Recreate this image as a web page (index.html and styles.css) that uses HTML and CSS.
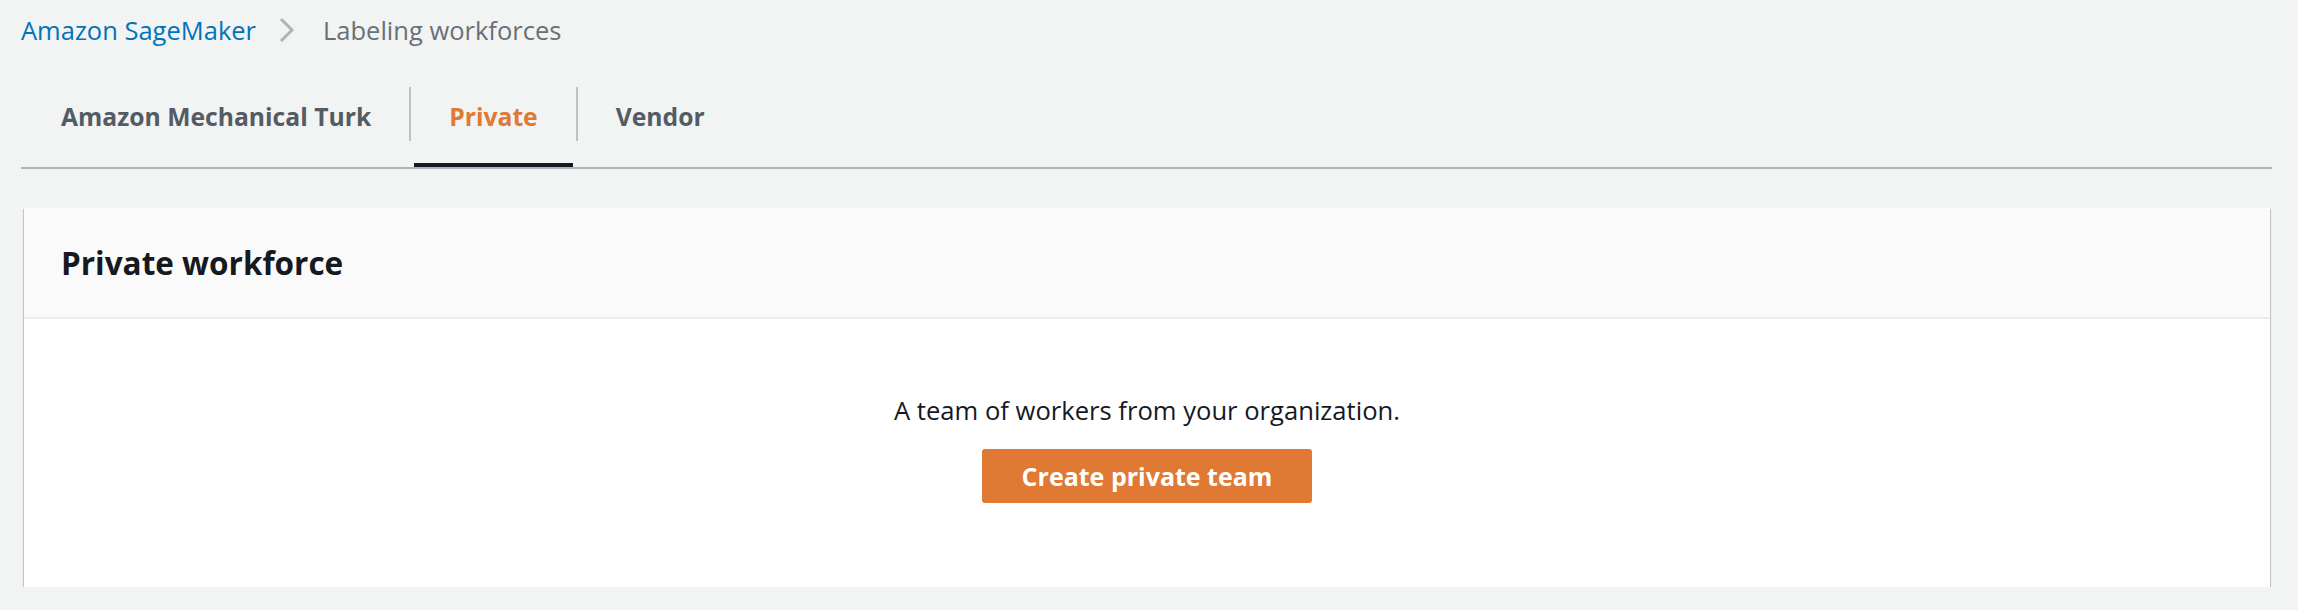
FILE: index.html
```html
<!DOCTYPE html>
<html lang="en">
<head>
<meta charset="utf-8">
<title>Labeling workforces</title>
<link rel="stylesheet" href="styles.css">
</head>
<body>
<div class="page">
  <nav class="breadcrumbs">
    <a class="crumb-link" href="#">Amazon SageMaker</a>
    <svg class="crumb-sep" width="17" height="26" viewBox="0 0 17 26"><path d="M3 2 L14 13 L3 24" fill="none" stroke="#aab7b8" stroke-width="3"/></svg>
    <span class="crumb-current">Labeling workforces</span>
  </nav>
  <div class="tabs">
    <button class="tab">Amazon Mechanical Turk</button>
    <span class="tab-divider"></span>
    <button class="tab active">Private</button>
    <span class="tab-divider"></span>
    <button class="tab">Vendor</button>
  </div>
  <section class="card">
    <header class="card-header">
      <h2>Private workforce</h2>
    </header>
    <div class="card-body">
      <p>A team of workers from your organization.</p>
      <button class="btn-primary">Create private team</button>
    </div>
  </section>
</div>
</body>
</html>
```
FILE: styles.css
```css
* { box-sizing: border-box; }
html, body { margin: 0; padding: 0; }
body {
  background: #f2f3f3;
  font-family: "Open Sans", Roboto, "Liberation Sans", sans-serif;
  color: #16191f;
}
.page {
  padding: 15px 26px 0 21px;
}
.breadcrumbs {
  display: flex;
  align-items: center;
  height: 30px;
  font-size: 25.5px;
  line-height: 30px;
}
.crumb-link {
  color: #0073bb;
  text-decoration: none;
}
.crumb-sep {
  margin: 0 28px 0 22px;
}
.crumb-current {
  color: #687078;
}
.tabs {
  display: flex;
  align-items: flex-start;
  margin-top: 22px;
  border-bottom: 2px solid #aab7b8;
}
.tab {
  background: none;
  border: 0;
  margin: 0 3px;
  padding: 23px 35px 19px;
  border-bottom: 4px solid transparent;
  font-family: inherit;
  font-size: 24.7px;
  line-height: 54px;
  font-weight: 700;
  color: #545b64;
  cursor: pointer;
}
.tab:first-child {
  padding-left: 37px;
}
.tab.active {
  border-bottom-color: #16191f;
  color: #df7934;
}
.tab-divider {
  width: 2px;
  height: 54px;
  margin-top: 20px;
  background: #b9c3c4;
}
.card {
  margin: 39px 2px 0 3px;
  background: #fff;
  box-shadow: 0 1px 1px 0 rgba(0,28,36,.3), 1px 1px 1px 0 rgba(0,28,36,.15), -1px 1px 1px 0 rgba(0,28,36,.15);
}
.card-header {
  background: #fafafa;
  border-bottom: 2px solid #eaeded;
  height: 111px;
  display: flex;
  align-items: center;
  padding: 0 37px;
}
.card-header h2 {
  margin: 0;
  font-size: 31.5px;
  font-weight: 700;
  color: #16191f;
}
.card-body {
  display: flex;
  flex-direction: column;
  align-items: center;
  padding: 75px 20px 84px;
}
.card-body p {
  margin: 0 0 21px 0;
  font-size: 25.6px;
  line-height: 34px;
  color: #16191f;
}
.btn-primary {
  background: #df7934;
  border: 0;
  border-radius: 3px;
  height: 54px;
  padding: 0 40px;
  font-family: inherit;
  font-size: 25px;
  font-weight: 700;
  color: #fff;
  cursor: pointer;
}
```
